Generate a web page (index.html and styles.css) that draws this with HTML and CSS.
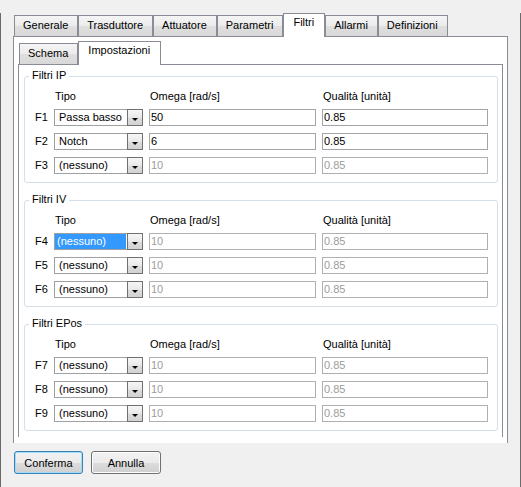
FILE: index.html
```html
<!DOCTYPE html>
<html lang="it">
<head>
<meta charset="utf-8">
<title>Filtri</title>
<link rel="stylesheet" href="styles.css">
</head>
<body>
<div class="window">
  <div class="outer-tabs">
    <div class="tabstrip">
      <div class="tab">Generale</div>
      <div class="tab">Trasduttore</div>
      <div class="tab">Attuatore</div>
      <div class="tab">Parametri</div>
      <div class="tab active">Filtri</div>
      <div class="tab">Allarmi</div>
      <div class="tab">Definizioni</div>
    </div>
    <div class="outer-panel">
      <div class="tabstrip">
        <div class="tab">Schema</div>
        <div class="tab active">Impostazioni</div>
      </div>
      <div class="inner-panel">

        <div class="group">
          <span class="legend">Filtri IP</span>
          <div class="grid">
            <span></span><span class="hdr">Tipo</span><span class="hdr">Omega [rad/s]</span><span class="hdr">Qualità [unità]</span>
            <span class="flabel">F1</span>
            <div class="combo"><span class="combo-text">Passa basso</span><span class="combo-btn"></span></div>
            <div class="field">50</div>
            <div class="field">0.85</div>
            <span class="flabel">F2</span>
            <div class="combo"><span class="combo-text">Notch</span><span class="combo-btn"></span></div>
            <div class="field">6</div>
            <div class="field">0.85</div>
            <span class="flabel">F3</span>
            <div class="combo"><span class="combo-text">(nessuno)</span><span class="combo-btn"></span></div>
            <div class="field disabled">10</div>
            <div class="field disabled">0.85</div>
          </div>
        </div>

        <div class="group">
          <span class="legend">Filtri IV</span>
          <div class="grid">
            <span></span><span class="hdr">Tipo</span><span class="hdr">Omega [rad/s]</span><span class="hdr">Qualità [unità]</span>
            <span class="flabel">F4</span>
            <div class="combo"><span class="combo-text selected">(nessuno)</span><span class="combo-btn"></span></div>
            <div class="field disabled">10</div>
            <div class="field disabled">0.85</div>
            <span class="flabel">F5</span>
            <div class="combo"><span class="combo-text">(nessuno)</span><span class="combo-btn"></span></div>
            <div class="field disabled">10</div>
            <div class="field disabled">0.85</div>
            <span class="flabel">F6</span>
            <div class="combo"><span class="combo-text">(nessuno)</span><span class="combo-btn"></span></div>
            <div class="field disabled">10</div>
            <div class="field disabled">0.85</div>
          </div>
        </div>

        <div class="group">
          <span class="legend">Filtri EPos</span>
          <div class="grid">
            <span></span><span class="hdr">Tipo</span><span class="hdr">Omega [rad/s]</span><span class="hdr">Qualità [unità]</span>
            <span class="flabel">F7</span>
            <div class="combo"><span class="combo-text">(nessuno)</span><span class="combo-btn"></span></div>
            <div class="field disabled">10</div>
            <div class="field disabled">0.85</div>
            <span class="flabel">F8</span>
            <div class="combo"><span class="combo-text">(nessuno)</span><span class="combo-btn"></span></div>
            <div class="field disabled">10</div>
            <div class="field disabled">0.85</div>
            <span class="flabel">F9</span>
            <div class="combo"><span class="combo-text">(nessuno)</span><span class="combo-btn"></span></div>
            <div class="field disabled">10</div>
            <div class="field disabled">0.85</div>
          </div>
        </div>

      </div>
    </div>
  </div>
  <div class="buttons">
    <button class="btn default">Conferma</button>
    <button class="btn">Annulla</button>
  </div>
  <svg class="grip" width="10" height="10" viewBox="0 0 10 10">
    <rect x="8" y="0" width="1" height="1" fill="#a8a8a8"/><rect x="9" y="1" width="1" height="1" fill="#fff"/>
    <rect x="4" y="4" width="1" height="1" fill="#a8a8a8"/><rect x="5" y="5" width="1" height="1" fill="#fff"/>
    <rect x="8" y="4" width="1" height="1" fill="#a8a8a8"/><rect x="9" y="5" width="1" height="1" fill="#fff"/>
    <rect x="0" y="8" width="1" height="1" fill="#a8a8a8"/><rect x="1" y="9" width="1" height="1" fill="#fff"/>
    <rect x="4" y="8" width="1" height="1" fill="#a8a8a8"/><rect x="5" y="9" width="1" height="1" fill="#fff"/>
    <rect x="8" y="8" width="1" height="1" fill="#a8a8a8"/><rect x="9" y="9" width="1" height="1" fill="#fff"/>
  </svg>
</div>
</body>
</html>
```
FILE: styles.css
```css
html, body {
  margin: 0;
  padding: 0;
  background: #f0f0f0;
}
body {
  font-family: "Liberation Sans", Arial, sans-serif;
  font-size: 11px;
  line-height: 13px;
  color: #000;
}
.window {
  position: relative;
  width: 521px;
  height: 487px;
  box-sizing: border-box;
  border: 1px solid #6b6b6b;
  border-top: none;
  background: #f0f0f0;
}
.outer-tabs {
  margin: 13px 12px 0 12px;
}
.tabstrip {
  display: flex;
  align-items: flex-end;
  height: 23px;
  padding-left: 1px;
}
.tab {
  height: 21px;
  box-sizing: border-box;
  border: 1px solid #898c95;
  border-bottom: none;
  padding: 3px 9px 0 8px;
  white-space: nowrap;
  background: linear-gradient(to bottom, #f5f5f5 0%, #ebebeb 50%, #dfdfdf 51%, #d8d8d8 100%);
}
.tab.active {
  height: 24px;
  margin-bottom: -1px;
  padding-top: 2px;
  padding-left: 9px;
  padding-right: 10px;
  background: #fff;
  position: relative;
  z-index: 1;
}
.outer-panel {
  height: 407px;
  box-sizing: border-box;
  border: 1px solid #898c95;
  border-bottom: none;
  background: #fff;
  padding: 4px 4px 0 4px;
}
.inner-panel {
  height: 373px;
  box-sizing: border-box;
  border: 1px solid #898c95;
  border-bottom: none;
  background: #fff;
  padding: 11px 4px 0 5px;
}
.group {
  position: relative;
  height: 107px;
  box-sizing: border-box;
  border: 1px solid #d5dfe5;
  border-radius: 3px;
  padding-top: 13px;
  margin-bottom: 17px;
}
.legend {
  position: absolute;
  top: -8px;
  left: 4px;
  padding: 0 3px;
  background: #fff;
}
.grid {
  display: grid;
  grid-template-columns: 23px 89px 167px 166px;
  grid-template-rows: 12px 17px 17px 17px;
  column-gap: 6px;
  row-gap: 7px;
}
.hdr {
  padding-left: 1px;
  white-space: nowrap;
}
.flabel {
  padding-left: 10px;
  line-height: 17px;
}
.combo {
  display: flex;
  height: 17px;
  box-sizing: border-box;
  border: 1px solid #a0a0a0;
  background: #fff;
}
.combo-text {
  flex: 1;
  padding-left: 4px;
  line-height: 15px;
  white-space: nowrap;
}
.combo-text.selected {
  background: #3399ff;
  color: #fff;
  padding-left: 2px;
  margin-right: 1px;
}
.combo-btn {
  position: relative;
  width: 16px;
  margin: -1px -1px -1px 0;
  box-sizing: border-box;
  border: 1px solid #707070;
  background: linear-gradient(to bottom, #f6f6f6 0%, #e9e9e9 50%, #dcdcdc 51%, #d2d2d2 100%);
}
.combo-btn::after {
  content: "";
  position: absolute;
  left: 4px;
  top: 8px;
  border-left: 3px solid transparent;
  border-right: 3px solid transparent;
  border-top: 3px solid #000;
}
.field {
  height: 17px;
  box-sizing: border-box;
  border: 1px solid #a5a5a5;
  background: #fff;
  padding-left: 1px;
  line-height: 15px;
}
.field.disabled {
  color: #9c9c9c;
  border-color: #b0b0b0;
}
.buttons {
  display: flex;
  gap: 8px;
  margin-top: 8px;
  padding-left: 13px;
}
.btn {
  width: 70px;
  height: 23px;
  box-sizing: border-box;
  border: 1px solid #707070;
  border-radius: 3px;
  background: linear-gradient(to bottom, #f2f2f2 0%, #ebebeb 50%, #dddddd 51%, #cfcfcf 100%);
  font-family: "Liberation Sans", Arial, sans-serif;
  font-size: 11px;
  color: #000;
  padding: 0;
  box-shadow: inset 0 0 0 1px #fcfcfc;
}
.btn.default {
  width: 69px;
  border-color: #3c7fb1;
  box-shadow: inset 0 0 0 1px #9fdcfb;
}
.grip {
  position: absolute;
  right: 2px;
  bottom: 2px;
}
```
